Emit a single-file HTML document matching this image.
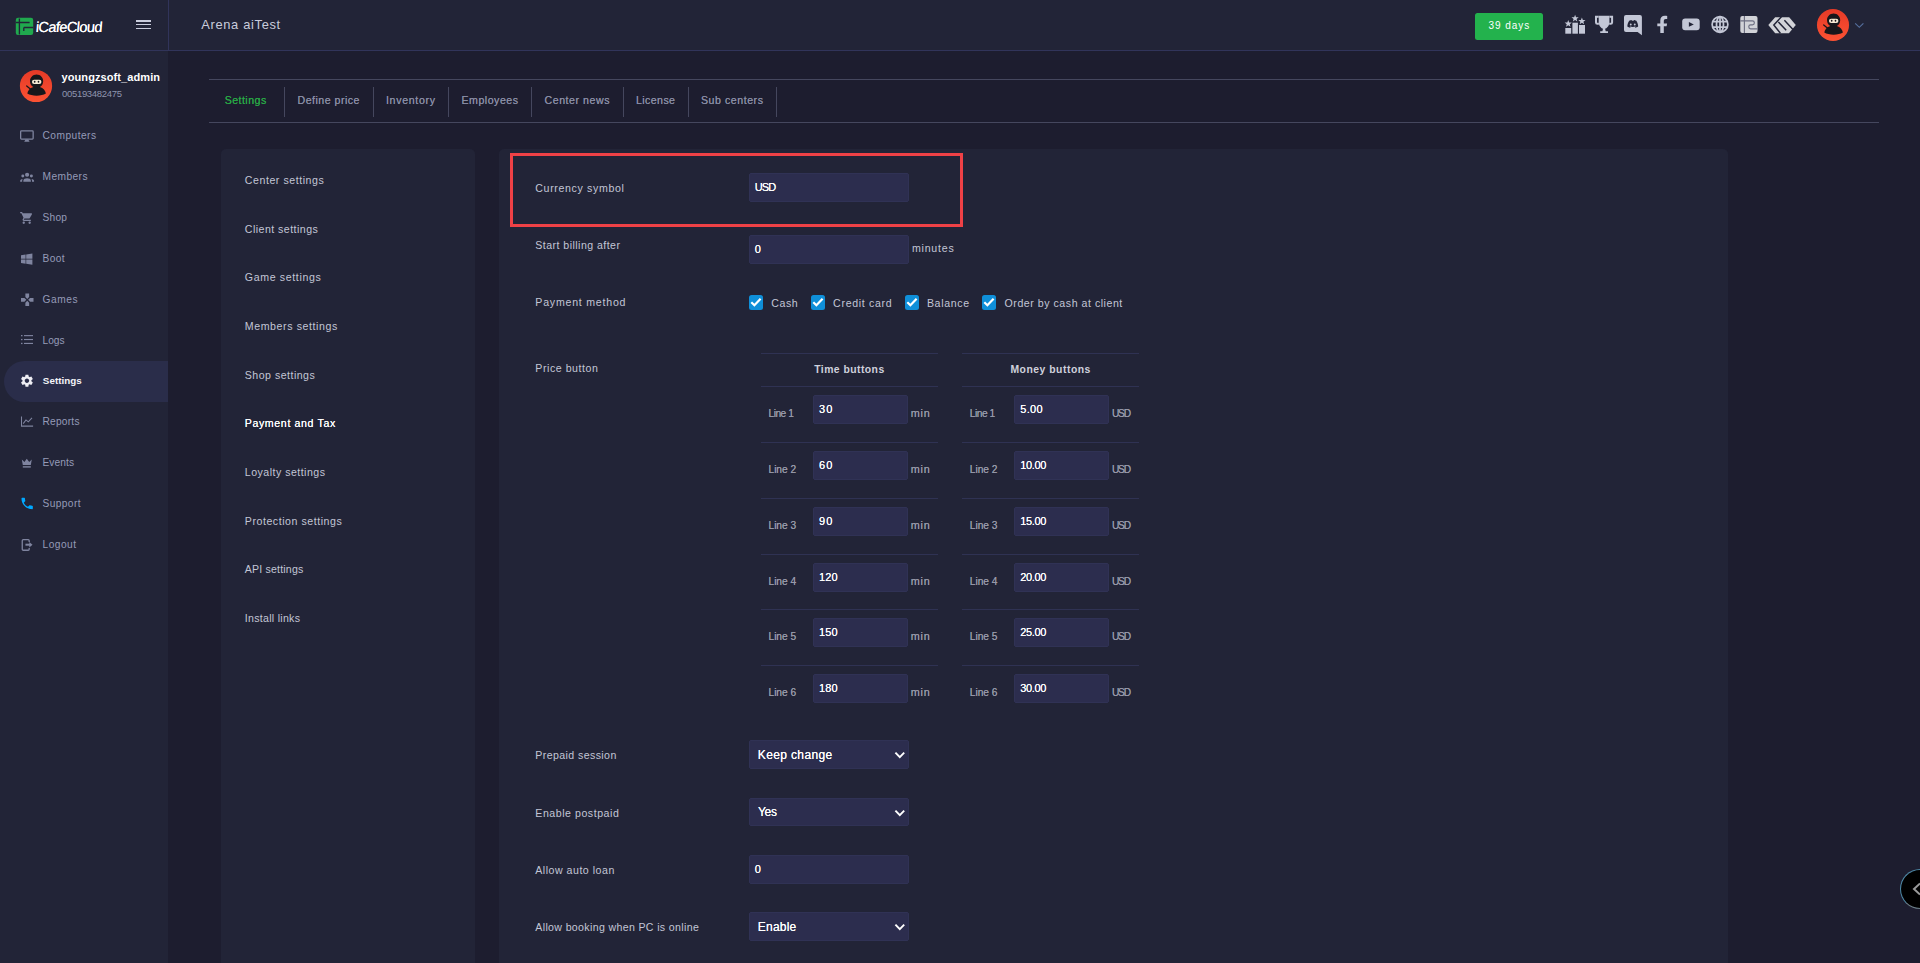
<!DOCTYPE html>
<html lang="en"><head><meta charset="utf-8"><title>iCafeCloud - Settings</title>
<style>
*{box-sizing:border-box;margin:0;padding:0}
html,body{width:1920px;height:963px;overflow:hidden;background:#1d1d2f;font-family:"Liberation Sans",sans-serif;}
.abs{position:absolute}
.t{position:absolute;white-space:nowrap;line-height:20px;height:20px}
#header{position:absolute;left:0;top:0;width:1920px;height:51px;background:#222437;border-bottom:1px solid #31345a}
#hdiv{position:absolute;left:168px;top:0;width:1px;height:50px;background:#31345a}
#sidebar{position:absolute;left:0;top:51px;width:168px;height:912px;background:#222437}
#active{position:absolute;left:4px;top:361px;width:164px;height:41px;background:#2a2d4a;border-radius:21px 0 0 21px}
.hl{position:absolute;height:1px;background:#45475e}
.vl{position:absolute;width:1px;background:#45475e;top:87px;height:30px}
.panel{position:absolute;background:#222437;border-radius:5px}
.inp{position:absolute;background:#2c2d4e;border:1px solid #303255;border-radius:2px;height:29px;color:#fff;font-size:11px;line-height:27px;padding-left:5px;font-family:"Liberation Sans",sans-serif;text-shadow:0 0 0.4px #fff}
.cb{position:absolute;top:295.2px;width:14.2px;height:14.6px;background:#0f8fd9;border-radius:2.5px}
.cb svg{position:absolute;left:0;top:0}
.tl{position:absolute;height:1px;background:#2f3253}
#logotext{left:34.6px;top:16.5px;font-size:14.6px;line-height:20px;color:#fff;letter-spacing:-0.62px;white-space:nowrap;text-shadow:0 0 0.5px #fff;display:inline-block;transform:skewX(-5deg);transform-origin:0 100%}
.hb{left:136px;width:15px;height:1.5px;background:#c9ccdc}

</style></head>
<body>
<div id="header"></div>
<div id="hdiv"></div>
<div id="sidebar"></div>
<div id="active"></div>

<!-- logo -->
<svg class="abs" style="left:15px;top:17px" width="20" height="19" viewBox="15 17 20 19">
  <rect x="15.800" y="17.800" width="17.400" height="17.200" rx="2.200" fill="#20a94e"/>
  <path d="M19.400 18.600V34.400M15.800 22.500H29.600M23.800 27.500H33.200M23.800 27.500V31" fill="none" stroke="#222437" stroke-width="1.350"/>
</svg>
<span class="abs" id="logotext">iCafeCloud</span>
<!-- hamburger -->
<div class="abs hb" style="top:20.100px"></div>
<div class="abs hb" style="top:23.900px"></div>
<div class="abs hb" style="top:27.500px"></div>

<!-- days badge -->
<div class="abs" style="left:1475px;top:13px;width:68px;height:27px;background:#23b24d;border-radius:2.500px"></div>

<!-- header icons -->
<svg class="abs" style="left:1560px;top:5px" width="310" height="40" viewBox="1560 5 310 40">
  <g fill="#c3c7d6">
    <rect x="1565.300" y="28" width="5.900" height="5.700"/><rect x="1572.400" y="22.700" width="5.500" height="11"/><rect x="1579" y="25" width="6" height="8.700"/>
    <polygon points="1568.25,19.90 1569.19,22.41 1571.86,22.53 1569.77,24.19 1570.48,26.77 1568.25,25.30 1566.02,26.77 1566.73,24.19 1564.64,22.53 1567.31,22.41"/><polygon points="1575.10,14.70 1576.04,17.21 1578.71,17.33 1576.62,18.99 1577.33,21.57 1575.10,20.10 1572.87,21.57 1573.58,18.99 1571.49,17.33 1574.16,17.21"/><polygon points="1581.90,17.40 1582.84,19.91 1585.51,20.03 1583.42,21.69 1584.13,24.27 1581.90,22.80 1579.67,24.27 1580.38,21.69 1578.29,20.03 1580.96,19.91"/>
    <path d="M1598.700 15.800H1609.400V22C1609.400 26.400 1606.500 28.300 1605.100 28.800L1605.700 31.200H1608V33H1600.200V31.200H1602.400L1603 28.800C1601.600 28.300 1598.700 26.400 1598.700 22Z"/>
    <path d="M1598.700 16.800H1596V22.400Q1596 23.800 1597.400 23.800H1598.900M1609.400 16.800H1612.100V22.400Q1612.100 23.800 1610.700 23.800H1609.200" fill="none" stroke="#c3c7d6" stroke-width="2"/>
    <path d="M1626 14.900H1639.900A2 2 0 0 1 1641.900 16.900V35.200L1637.600 32H1626A2 2 0 0 1 1624 30V16.900A2 2 0 0 1 1626 14.900Z"/>
    <path d="M1663.800 33V26.200H1666.600L1667.100 23.400H1663.800V21.200C1663.800 19.700 1664.400 18.900 1665.800 18.900H1667.200V16C1666.600 15.900 1665.700 15.800 1664.800 15.800C1662 15.800 1660.300 17.500 1660.300 20.500V23.400H1657.300V26.200H1660.300V33Z"/>
    <rect x="1682.200" y="18.600" width="17.500" height="11.600" rx="3"/>
  </g>
  <g transform="translate(1632.750 24)" fill="#222437"><path d="M-3.600 -3.200C-2.600 -3.700 -1.600 -3.900 -1.200 -3.900L-0.900 -3.300H0.900L1.200 -3.900C1.600 -3.900 2.600 -3.700 3.600 -3.200C4.800 -1.400 5.500 0.800 5.400 2.600C4.400 3.400 3.300 3.700 2.700 3.800L2.100 2.900C2.500 2.800 2.900 2.600 3.200 2.300C1.200 3.200 -1.200 3.200 -3.200 2.300C-2.900 2.600 -2.500 2.800 -2.100 2.900L-2.700 3.800C-3.300 3.700 -4.400 3.400 -5.400 2.600C-5.500 0.800 -4.800 -1.400 -3.600 -3.200Z"/>
    <ellipse cx="-2" cy="0.500" rx="0.950" ry="1.100" fill="#c3c7d6"/><ellipse cx="2" cy="0.500" rx="0.950" ry="1.100" fill="#c3c7d6"/></g>
  <path d="M1688.900 22L1693.800 24.400L1688.900 26.800Z" fill="#222437"/>
  <g fill="none" stroke="#c3c7d6" stroke-width="1.750"><circle cx="1720" cy="24.400" r="7.850"/><ellipse cx="1720" cy="24.400" rx="3.500" ry="7.850"/><path d="M1720 16.600V32.200M1712.700 21.700H1727.300M1712.700 27.100H1727.300"/></g>
  <rect x="1740.300" y="16.100" width="17.200" height="16.900" rx="2" fill="#d2d3d8"/>
  <path d="M1744.400 16.100V33M1740.300 20.800H1752.400Q1754.300 20.800 1754.300 22.600V23.100Q1754.300 24.900 1752.400 24.900H1750.600Q1748.800 24.900 1748.800 26.600V27.100Q1748.800 28.800 1750.600 28.800H1757.500" fill="none" stroke="#6d6f82" stroke-width="1.150"/>
  <polygon points="1768.300,25 1775.200,17.300 1789.200,17.300 1795.800,25 1788.900,33.200 1775.200,33.200" fill="#d2d3d8"/>
  <path d="M1781.600 16.600L1773.800 25L1780.400 33.200M1778.400 22L1786.200 30.300M1784.400 20.200L1793 29.400" fill="none" stroke="#222437" stroke-width="1.450"/>
  <path d="M1855.200 23.300L1859.300 27.300L1863.400 23.300" fill="none" stroke="#56709f" stroke-width="1.150"/>
</svg>
<!-- avatar -->
<svg class="abs" style="left:1816px;top:8px" width="34" height="34" viewBox="0 0 34 34">
  <defs><linearGradient id="ag" x1="0" y1="0" x2="0" y2="1"><stop offset="0" stop-color="#e63a27"/><stop offset="1" stop-color="#fb5233"/></linearGradient></defs>
  <circle cx="17" cy="17" r="16.050" fill="url(#ag)"/>
  <path d="M17.600 5.600c3.700 0 6.600 2.900 6.600 6.600 0 2.500-1.300 4.600-3.300 5.800 3.300 1 5.600 3.500 6 6.600 -2.300 1.500-5.600 2.100-9.300 2.100s-7-.6-9.300-2.100c.4-3.100 2.700-5.600 6-6.600-2-1.200-3.300-3.300-3.300-5.800 0-3.700 2.900-6.600 6.600-6.600z" fill="#17171b"/>
  <rect x="13" y="10.700" width="9.400" height="4.300" rx="2.100" fill="#f6ead4"/>
  <ellipse cx="15.700" cy="12.800" rx="0.850" ry="1.050" fill="#17171b"/><ellipse cx="19.500" cy="12.800" rx="0.850" ry="1.050" fill="#17171b"/>
  <path d="M7.700 16.900l5.200 4.300" stroke="#17171b" stroke-width="1.300" stroke-linecap="round"/>
</svg>

<!-- sidebar avatar -->
<svg class="abs" style="left:19px;top:69px" width="34" height="34" viewBox="0 0 34 34">
  <circle cx="17" cy="17" r="16.100" fill="url(#ag)"/>
  <path d="M17.600 5.600c3.700 0 6.600 2.900 6.600 6.600 0 2.500-1.300 4.600-3.300 5.800 3.300 1 5.600 3.500 6 6.600 -2.300 1.500-5.600 2.100-9.300 2.100s-7-.6-9.300-2.100c.4-3.100 2.700-5.600 6-6.600-2-1.200-3.300-3.300-3.300-5.800 0-3.700 2.900-6.600 6.600-6.600z" fill="#17171b"/>
  <rect x="13" y="10.700" width="9.400" height="4.300" rx="2.100" fill="#f6ead4"/>
  <ellipse cx="15.700" cy="12.800" rx="0.850" ry="1.050" fill="#17171b"/><ellipse cx="19.500" cy="12.800" rx="0.850" ry="1.050" fill="#17171b"/>
  <path d="M7.700 16.900l5.200 4.300" stroke="#17171b" stroke-width="1.300" stroke-linecap="round"/>
</svg>

<!-- sidebar icons -->
<svg class="abs" style="left:14px;top:120px" width="30" height="440" viewBox="14 120 30 440">
  <g fill="#7f849f">
    <polygon points="25.500,139.400 28.300,139.400 29.600,141.800 24.200,141.800"/>
    <g transform="translate(27.100 177.350) scale(0.580 0.560) translate(-12 -10.950)"><circle cx="12" cy="6.500" r="3.600"/><circle cx="4.600" cy="8.500" r="2.600"/><circle cx="19.400" cy="8.500" r="2.600"/><path d="M5.500 19v-2.200c0-2.800 3.600-4.300 6.500-4.300s6.500 1.500 6.500 4.300V19z"/><path d="M0 19v-1.800c0-2 2.200-3.300 4.600-3.500-.7.800-1.100 1.900-1.100 3.100V19zM24 19v-1.800c0-2-2.200-3.300-4.600-3.500.7.800 1.100 1.900 1.100 3.100V19z"/></g>
    <g transform="translate(19.600 210.900) scale(0.592)"><path d="M7 18c-1.100 0-1.990.9-1.990 2S5.900 22 7 22s2-.9 2-2-.9-2-2-2zM1 2v2h2l3.600 7.590-1.350 2.450c-.16.280-.25.610-.25.960 0 1.100.9 2 2 2h12v-2H7.420c-.14 0-.25-.110-.25-.25l.03-.12.9-1.630h7.450c.75 0 1.410-.41 1.750-1.030l3.580-6.490c.08-.14.120-.31.120-.48 0-.55-.45-1-1-1H5.210l-.94-2H1zm16 16c-1.100 0-1.990.9-1.990 2s.89 2 1.990 2 2-.9 2-2-.9-2-2-2z"/></g>
    <path d="M21 255.200l4.600-.65v4.250H21zM26.200 254.450l6.200-.9v5.250h-6.200zM21 259.400h4.600v4.300L21 263.050zM26.200 259.400h6.200v5.300l-6.200-.9z"/>
    <g transform="translate(19.750 292.350) scale(0.625)"><path d="M15 7.500V2H9v5.500l3 3 3-3zM7.500 9H2v6h5.500l3-3-3-3zM9 16.500V22h6v-5.500l-3-3-3 3zM16.500 9l-3 3 3 3H22V9h-5.500z"/></g>
    <rect x="21" y="335" width="1.500" height="1.300"/><rect x="24" y="335.050" width="9" height="1.150"/><rect x="21" y="338.900" width="1.500" height="1.300"/><rect x="24" y="338.950" width="9" height="1.150"/><rect x="21" y="342.800" width="1.500" height="1.300"/><rect x="24" y="342.850" width="9" height="1.150"/>
    <polygon points="21.800,459.400 24.400,461.900 26.800,458.800 29.200,461.900 31.800,459.400 30.800,465.100 22.800,465.100"/><rect x="22.800" y="466.200" width="8" height="1.400"/>
    <polygon points="29.300,541.900 32.500,544.700 29.300,547.500"/>
  </g>
  <rect x="20.650" y="130.850" width="12.500" height="8.200" rx="0.800" fill="none" stroke="#7f849f" stroke-width="1.300"/>
  <g transform="translate(19.500 373.300) scale(0.620)" fill="#eeeef4"><path d="M19.140 12.940c.04-.3.060-.61.060-.94 0-.32-.02-.64-.07-.94l2.030-1.580c.18-.14.230-.41.120-.61l-1.920-3.320c-.12-.22-.37-.29-.59-.22l-2.390.96c-.5-.38-1.030-.7-1.620-.94l-.36-2.540c-.04-.24-.24-.41-.48-.41h-3.840c-.24 0-.43.170-.47.410l-.36 2.540c-.59.240-1.130.570-1.620.94l-2.390-.96c-.22-.08-.47 0-.59.220L2.740 8.870c-.12.210-.08.470.12.610l2.030 1.580c-.05.3-.09.630-.09.940s.02.640.07.940l-2.030 1.580c-.18.140-.23.410-.12.610l1.920 3.320c.12.220.37.290.59.220l2.390-.96c.5.380 1.030.7 1.620.94l.36 2.540c.05.240.24.410.48.410h3.840c.24 0 .44-.17.470-.41l.36-2.540c.59-.24 1.130-.56 1.620-.94l2.390.96c.22.080.47 0 .59-.22l1.920-3.320c.12-.22.070-.47-.12-.61l-2.010-1.580zM12 15.600c-1.980 0-3.600-1.620-3.600-3.600s1.620-3.600 3.600-3.600 3.600 1.620 3.600 3.600-1.620 3.600-3.600 3.600z"/></g>
  <path d="M21.500 416.600V426.100H33.100M23.200 423.600L26 419.900L28.300 421.800L32 417.800" fill="none" stroke="#7f849f" stroke-width="1.050"/>
  <g transform="translate(19.600 495.900) scale(0.630)" fill="#00a8ff"><path d="M6.620 10.790c1.440 2.830 3.760 5.140 6.590 6.590l2.200-2.200c.27-.27.670-.36 1.020-.24 1.120.37 2.330.57 3.570.57.550 0 1 .45 1 1V20c0 .55-.45 1-1 1-9.390 0-17-7.610-17-17 0-.55.450-1 1-1h3.500c.55 0 1 .45 1 1 0 1.250.2 2.450.57 3.570.11.350.03.740-.25 1.020l-2.200 2.200z"/></g>
  <path d="M29.200 542V540.700Q29.200 539.700 28.200 539.700H23.250Q22.250 539.700 22.250 540.700V549.250Q22.250 550.250 23.250 550.250H28.200Q29.200 550.250 29.200 549.250V547.900" fill="none" stroke="#7f849f" stroke-width="1.300"/>
  <path d="M25.450 544.700H30" fill="none" stroke="#7f849f" stroke-width="2"/>
</svg>

<!-- tabs -->
<div class="hl" style="left:209px;top:79px;width:1670px"></div>
<div class="hl" style="left:209px;top:122px;width:1670px"></div>
<div class="vl" style="left:284px"></div><div class="vl" style="left:373px"></div><div class="vl" style="left:448px"></div><div class="vl" style="left:531px"></div><div class="vl" style="left:623px"></div><div class="vl" style="left:688px"></div><div class="vl" style="left:776px"></div>

<!-- panels -->
<div class="panel" style="left:221px;top:149px;width:254px;height:830px"></div>
<div class="panel" style="left:499px;top:149px;width:1229px;height:830px"></div>
<div class="abs" style="left:509.500px;top:152.500px;width:453.500px;height:74.500px;border:3px solid #ef4146"></div>

<!-- inputs -->
<div class="inp" style="left:749px;top:173px;width:160px"></div>
<div class="inp" style="left:749px;top:235px;width:160px"></div>
<div class="inp" style="left:749px;top:855px;width:160px"></div>

<!-- checkboxes -->
<div class="cb" style="left:748.8px"><svg width="14" height="15" viewBox="0 0 14 15" fill="none" stroke="#fff" stroke-width="2.200"><path d="M2.300 7.200L5.400 10.200L11.600 3.700"/></svg></div>
<div class="cb" style="left:810.8px"><svg width="14" height="15" viewBox="0 0 14 15" fill="none" stroke="#fff" stroke-width="2.200"><path d="M2.300 7.200L5.400 10.200L11.600 3.700"/></svg></div>
<div class="cb" style="left:904.9px"><svg width="14" height="15" viewBox="0 0 14 15" fill="none" stroke="#fff" stroke-width="2.200"><path d="M2.300 7.200L5.400 10.200L11.600 3.700"/></svg></div>
<div class="cb" style="left:982px"><svg width="14" height="15" viewBox="0 0 14 15" fill="none" stroke="#fff" stroke-width="2.200"><path d="M2.300 7.200L5.400 10.200L11.600 3.700"/></svg></div>

<!-- tables -->
<div class="tl" style="left:761px;top:353px;width:177px"></div><div class="tl" style="left:962px;top:353px;width:177px"></div>
<div class="tl" style="left:761px;top:386px;width:177px"></div><div class="tl" style="left:962px;top:386px;width:177px"></div>
<div class="tl" style="left:761px;top:442px;width:177px"></div><div class="tl" style="left:962px;top:442px;width:177px"></div>
<div class="tl" style="left:761px;top:498px;width:177px"></div><div class="tl" style="left:962px;top:498px;width:177px"></div>
<div class="tl" style="left:761px;top:554px;width:177px"></div><div class="tl" style="left:962px;top:554px;width:177px"></div>
<div class="tl" style="left:761px;top:609px;width:177px"></div><div class="tl" style="left:962px;top:609px;width:177px"></div>
<div class="tl" style="left:761px;top:665px;width:177px"></div><div class="tl" style="left:962px;top:665px;width:177px"></div>
<div class="inp" style="left:813px;top:395px;width:95px"></div><div class="inp" style="left:1014px;top:395px;width:95px"></div>
<div class="inp" style="left:813px;top:451px;width:95px"></div><div class="inp" style="left:1014px;top:451px;width:95px"></div>
<div class="inp" style="left:813px;top:507px;width:95px"></div><div class="inp" style="left:1014px;top:507px;width:95px"></div>
<div class="inp" style="left:813px;top:563px;width:95px"></div><div class="inp" style="left:1014px;top:563px;width:95px"></div>
<div class="inp" style="left:813px;top:618px;width:95px"></div><div class="inp" style="left:1014px;top:618px;width:95px"></div>
<div class="inp" style="left:813px;top:674px;width:95px"></div><div class="inp" style="left:1014px;top:674px;width:95px"></div>

<!-- selects -->
<div class="inp" style="left:749px;top:740px;width:160px"><svg class="abs" style="left:144px;top:10px" width="12" height="9" viewBox="0 0 12 9" fill="none" stroke="#fff" stroke-width="1.900"><path d="M1.400 1.600l4.400 4.500 4.400-4.500"/></svg></div>
<div class="inp" style="left:749px;top:798px;width:160px;height:28px"><svg class="abs" style="left:144px;top:10px" width="12" height="9" viewBox="0 0 12 9" fill="none" stroke="#fff" stroke-width="1.900"><path d="M1.400 1.600l4.400 4.500 4.400-4.500"/></svg></div>
<div class="inp" style="left:749px;top:912px;width:160px"><svg class="abs" style="left:144px;top:10px" width="12" height="9" viewBox="0 0 12 9" fill="none" stroke="#fff" stroke-width="1.900"><path d="M1.400 1.600l4.400 4.500 4.400-4.500"/></svg></div>

<!-- floating btn -->
<div class="abs" style="left:1900px;top:869px;width:40px;height:40px;border-radius:50%;background:#000;border:1px solid;border-color:#4f8aa8 #6b7d86 #6b7d86 #4f8aa8"></div>
<svg class="abs" style="left:1911px;top:880px" width="9" height="18" viewBox="0 0 9 18" fill="none" stroke="#9a9a9a" stroke-width="2"><path d="M9 3.500L3 9l6 5.500"/></svg>

<div id="texts">
<span class="t" style="left:201.2px;top:14.53px;font-size:12.9px;color:#c9ccdc;letter-spacing:0.668px;">Arena aiTest</span>
<span class="t" style="left:1488.6px;top:15.54px;font-size:10px;color:#ffffff;letter-spacing:0.928px;">39 days</span>
<span class="t" style="left:61.5px;top:67.19px;font-size:11px;font-weight:700;color:#ffffff;letter-spacing:0.089px;">youngzsoft_admin</span>
<span class="t" style="left:62px;top:83.71px;font-size:9.5px;color:#8e94ae;letter-spacing:-0.310px;">005193482475</span>
<span class="t" style="left:42.5px;top:126.47px;font-size:10.2px;color:#959bb8;letter-spacing:0.459px;">Computers</span>
<span class="t" style="left:42.5px;top:167.47px;font-size:10.2px;color:#959bb8;letter-spacing:0.422px;">Members</span>
<span class="t" style="left:42.5px;top:208.47px;font-size:10.2px;color:#959bb8;letter-spacing:0.234px;">Shop</span>
<span class="t" style="left:42.5px;top:249.47px;font-size:10.2px;color:#959bb8;letter-spacing:0.344px;">Boot</span>
<span class="t" style="left:42.5px;top:290.47px;font-size:10.2px;color:#959bb8;letter-spacing:0.539px;">Games</span>
<span class="t" style="left:42.5px;top:331.47px;font-size:10.2px;color:#959bb8;letter-spacing:-0.031px;">Logs</span>
<span class="t" style="left:42.8px;top:370.60px;font-size:9.8px;font-weight:700;color:#f4f4f8;letter-spacing:0.049px;">Settings</span>
<span class="t" style="left:42.5px;top:412.47px;font-size:10.2px;color:#959bb8;letter-spacing:0.221px;">Reports</span>
<span class="t" style="left:42.5px;top:453.47px;font-size:10.2px;color:#959bb8;letter-spacing:0.069px;">Events</span>
<span class="t" style="left:42.5px;top:494.47px;font-size:10.2px;color:#959bb8;letter-spacing:0.385px;">Support</span>
<span class="t" style="left:42.5px;top:535.47px;font-size:10.2px;color:#959bb8;letter-spacing:0.466px;">Logout</span>
<span class="t" style="left:224.7px;top:90.33px;font-size:10.6px;color:#28a745;letter-spacing:0.460px;text-shadow:0 0 0.45px currentColor">Settings</span>
<span class="t" style="left:297.5px;top:90.33px;font-size:10.6px;color:#888ca4;letter-spacing:0.497px;text-shadow:0 0 0.45px currentColor">Define price</span>
<span class="t" style="left:386px;top:90.33px;font-size:10.6px;color:#888ca4;letter-spacing:0.678px;text-shadow:0 0 0.45px currentColor">Inventory</span>
<span class="t" style="left:461.5px;top:90.33px;font-size:10.6px;color:#888ca4;letter-spacing:0.512px;text-shadow:0 0 0.45px currentColor">Employees</span>
<span class="t" style="left:544.5px;top:90.33px;font-size:10.6px;color:#888ca4;letter-spacing:0.552px;text-shadow:0 0 0.45px currentColor">Center news</span>
<span class="t" style="left:636px;top:90.33px;font-size:10.6px;color:#888ca4;letter-spacing:0.414px;text-shadow:0 0 0.45px currentColor">License</span>
<span class="t" style="left:701px;top:90.33px;font-size:10.6px;color:#888ca4;letter-spacing:0.545px;text-shadow:0 0 0.45px currentColor">Sub centers</span>
<span class="t" style="left:244.8px;top:170.33px;font-size:10.6px;color:#c3c6d6;letter-spacing:0.554px;">Center settings</span>
<span class="t" style="left:244.8px;top:219.33px;font-size:10.6px;color:#c3c6d6;letter-spacing:0.461px;">Client settings</span>
<span class="t" style="left:244.8px;top:267.33px;font-size:10.6px;color:#c3c6d6;letter-spacing:0.641px;">Game settings</span>
<span class="t" style="left:244.8px;top:316.33px;font-size:10.6px;color:#c3c6d6;letter-spacing:0.593px;">Members settings</span>
<span class="t" style="left:244.8px;top:365.33px;font-size:10.6px;color:#c3c6d6;letter-spacing:0.483px;">Shop settings</span>
<span class="t" style="left:244.7px;top:413.33px;font-size:10.6px;color:#ffffff;letter-spacing:0.638px;text-shadow:0 0 0.45px #fff">Payment and Tax</span>
<span class="t" style="left:244.8px;top:462.33px;font-size:10.6px;color:#c3c6d6;letter-spacing:0.478px;">Loyalty settings</span>
<span class="t" style="left:244.8px;top:511.33px;font-size:10.6px;color:#c3c6d6;letter-spacing:0.547px;">Protection settings</span>
<span class="t" style="left:244.8px;top:559.33px;font-size:10.6px;color:#c3c6d6;letter-spacing:0.179px;">API settings</span>
<span class="t" style="left:244.8px;top:608.33px;font-size:10.6px;color:#c3c6d6;letter-spacing:0.282px;">Install links</span>
<span class="t" style="left:535.3px;top:178.33px;font-size:10.6px;color:#c3c6d6;letter-spacing:0.651px;">Currency symbol</span>
<span class="t" style="left:535.3px;top:235.33px;font-size:10.6px;color:#c3c6d6;letter-spacing:0.453px;">Start billing after</span>
<span class="t" style="left:535.3px;top:292.33px;font-size:10.6px;color:#c3c6d6;letter-spacing:0.777px;">Payment method</span>
<span class="t" style="left:535.3px;top:358.33px;font-size:10.6px;color:#c3c6d6;letter-spacing:0.550px;">Price button</span>
<span class="t" style="left:535.3px;top:745.33px;font-size:10.6px;color:#c3c6d6;letter-spacing:0.401px;">Prepaid session</span>
<span class="t" style="left:535.3px;top:803.33px;font-size:10.6px;color:#c3c6d6;letter-spacing:0.537px;">Enable postpaid</span>
<span class="t" style="left:535.3px;top:860.33px;font-size:10.6px;color:#c3c6d6;letter-spacing:0.510px;">Allow auto loan</span>
<span class="t" style="left:535.3px;top:917.33px;font-size:10.6px;color:#c3c6d6;letter-spacing:0.346px;">Allow booking when PC is online</span>
<span class="t" style="left:911.9px;top:238.33px;font-size:10.6px;color:#c3c6d6;letter-spacing:0.784px;">minutes</span>
<span class="t" style="left:771.2px;top:293.33px;font-size:10.6px;color:#c3c6d6;letter-spacing:0.589px;">Cash</span>
<span class="t" style="left:833.1px;top:293.33px;font-size:10.6px;color:#c3c6d6;letter-spacing:0.679px;">Credit card</span>
<span class="t" style="left:926.9px;top:293.33px;font-size:10.6px;color:#c3c6d6;letter-spacing:0.667px;">Balance</span>
<span class="t" style="left:1004.6px;top:293.33px;font-size:10.6px;color:#c3c6d6;letter-spacing:0.533px;">Order by cash at client</span>
<span class="t" style="left:814.2px;top:360.40px;font-size:10.4px;font-weight:700;color:#cfd1dc;letter-spacing:0.450px;">Time buttons</span>
<span class="t" style="left:1010.4px;top:360.40px;font-size:10.4px;font-weight:700;color:#cfd1dc;letter-spacing:0.509px;">Money buttons</span>
<span class="t" style="left:768.5px;top:404.47px;font-size:10.2px;color:#9698a8;letter-spacing:-0.493px;text-shadow:0 0 0.45px currentColor">Line 1</span>
<span class="t" style="left:910.8px;top:403.26px;font-size:10.8px;color:#9698a8;letter-spacing:0.797px;text-shadow:0 0 0.45px currentColor">min</span>
<span class="t" style="left:969.8px;top:404.47px;font-size:10.2px;color:#9698a8;letter-spacing:-0.493px;text-shadow:0 0 0.45px currentColor">Line 1</span>
<span class="t" style="left:1112px;top:404.47px;font-size:10.2px;color:#9698a8;letter-spacing:-1.258px;text-shadow:0 0 0.3px currentColor">USD</span>
<span class="t" style="left:819px;top:399.19px;font-size:11px;color:#ffffff;letter-spacing:1.050px;text-shadow:0 0 0.35px #fff">30</span>
<span class="t" style="left:1020.3px;top:399.19px;font-size:11px;color:#ffffff;letter-spacing:0.293px;text-shadow:0 0 0.35px #fff">5.00</span>
<span class="t" style="left:768.5px;top:460.47px;font-size:10.2px;color:#9698a8;letter-spacing:-0.033px;text-shadow:0 0 0.45px currentColor">Line 2</span>
<span class="t" style="left:910.8px;top:459.26px;font-size:10.8px;color:#9698a8;letter-spacing:0.797px;text-shadow:0 0 0.45px currentColor">min</span>
<span class="t" style="left:969.8px;top:460.47px;font-size:10.2px;color:#9698a8;letter-spacing:-0.033px;text-shadow:0 0 0.45px currentColor">Line 2</span>
<span class="t" style="left:1112px;top:460.47px;font-size:10.2px;color:#9698a8;letter-spacing:-1.258px;text-shadow:0 0 0.3px currentColor">USD</span>
<span class="t" style="left:819px;top:455.19px;font-size:11px;color:#ffffff;letter-spacing:1.050px;text-shadow:0 0 0.35px #fff">60</span>
<span class="t" style="left:1020.3px;top:455.19px;font-size:11px;color:#ffffff;letter-spacing:-0.383px;text-shadow:0 0 0.35px #fff">10.00</span>
<span class="t" style="left:768.5px;top:516.47px;font-size:10.2px;color:#9698a8;letter-spacing:-0.033px;text-shadow:0 0 0.45px currentColor">Line 3</span>
<span class="t" style="left:910.8px;top:515.26px;font-size:10.8px;color:#9698a8;letter-spacing:0.797px;text-shadow:0 0 0.45px currentColor">min</span>
<span class="t" style="left:969.8px;top:516.47px;font-size:10.2px;color:#9698a8;letter-spacing:-0.033px;text-shadow:0 0 0.45px currentColor">Line 3</span>
<span class="t" style="left:1112px;top:516.47px;font-size:10.2px;color:#9698a8;letter-spacing:-1.258px;text-shadow:0 0 0.3px currentColor">USD</span>
<span class="t" style="left:819px;top:511.19px;font-size:11px;color:#ffffff;letter-spacing:1.050px;text-shadow:0 0 0.35px #fff">90</span>
<span class="t" style="left:1020.3px;top:511.19px;font-size:11px;color:#ffffff;letter-spacing:-0.383px;text-shadow:0 0 0.35px #fff">15.00</span>
<span class="t" style="left:768.5px;top:572.47px;font-size:10.2px;color:#9698a8;letter-spacing:-0.033px;text-shadow:0 0 0.45px currentColor">Line 4</span>
<span class="t" style="left:910.8px;top:571.26px;font-size:10.8px;color:#9698a8;letter-spacing:0.797px;text-shadow:0 0 0.45px currentColor">min</span>
<span class="t" style="left:969.8px;top:572.47px;font-size:10.2px;color:#9698a8;letter-spacing:-0.033px;text-shadow:0 0 0.45px currentColor">Line 4</span>
<span class="t" style="left:1112px;top:572.47px;font-size:10.2px;color:#9698a8;letter-spacing:-1.258px;text-shadow:0 0 0.3px currentColor">USD</span>
<span class="t" style="left:819px;top:567.19px;font-size:11px;color:#ffffff;letter-spacing:0.070px;text-shadow:0 0 0.35px #fff">120</span>
<span class="t" style="left:1020.3px;top:567.19px;font-size:11px;color:#ffffff;letter-spacing:-0.383px;text-shadow:0 0 0.35px #fff">20.00</span>
<span class="t" style="left:768.5px;top:627.47px;font-size:10.2px;color:#9698a8;letter-spacing:-0.033px;text-shadow:0 0 0.45px currentColor">Line 5</span>
<span class="t" style="left:910.8px;top:626.26px;font-size:10.8px;color:#9698a8;letter-spacing:0.797px;text-shadow:0 0 0.45px currentColor">min</span>
<span class="t" style="left:969.8px;top:627.47px;font-size:10.2px;color:#9698a8;letter-spacing:-0.033px;text-shadow:0 0 0.45px currentColor">Line 5</span>
<span class="t" style="left:1112px;top:627.47px;font-size:10.2px;color:#9698a8;letter-spacing:-1.258px;text-shadow:0 0 0.3px currentColor">USD</span>
<span class="t" style="left:819px;top:622.19px;font-size:11px;color:#ffffff;letter-spacing:0.070px;text-shadow:0 0 0.35px #fff">150</span>
<span class="t" style="left:1020.3px;top:622.19px;font-size:11px;color:#ffffff;letter-spacing:-0.383px;text-shadow:0 0 0.35px #fff">25.00</span>
<span class="t" style="left:768.5px;top:683.47px;font-size:10.2px;color:#9698a8;letter-spacing:-0.033px;text-shadow:0 0 0.45px currentColor">Line 6</span>
<span class="t" style="left:910.8px;top:682.26px;font-size:10.8px;color:#9698a8;letter-spacing:0.797px;text-shadow:0 0 0.45px currentColor">min</span>
<span class="t" style="left:969.8px;top:683.47px;font-size:10.2px;color:#9698a8;letter-spacing:-0.033px;text-shadow:0 0 0.45px currentColor">Line 6</span>
<span class="t" style="left:1112px;top:683.47px;font-size:10.2px;color:#9698a8;letter-spacing:-1.258px;text-shadow:0 0 0.3px currentColor">USD</span>
<span class="t" style="left:819px;top:678.19px;font-size:11px;color:#ffffff;letter-spacing:0.070px;text-shadow:0 0 0.35px #fff">180</span>
<span class="t" style="left:1020.3px;top:678.19px;font-size:11px;color:#ffffff;letter-spacing:-0.383px;text-shadow:0 0 0.35px #fff">30.00</span>
<span class="t" style="left:754.8px;top:177.19px;font-size:11px;color:#ffffff;letter-spacing:-0.867px;text-shadow:0 0 0.35px #fff">USD</span>
<span class="t" style="left:754.8px;top:239.19px;font-size:11px;color:#ffffff;letter-spacing:0.675px;text-shadow:0 0 0.35px #fff">0</span>
<span class="t" style="left:754.8px;top:859.19px;font-size:11px;color:#ffffff;letter-spacing:0.675px;text-shadow:0 0 0.35px #fff">0</span>
<span class="t" style="left:757.8px;top:744.84px;font-size:12px;color:#ffffff;letter-spacing:0.367px;text-shadow:0 0 0.45px #fff">Keep change</span>
<span class="t" style="left:758px;top:801.84px;font-size:12px;color:#ffffff;letter-spacing:-0.289px;text-shadow:0 0 0.45px #fff">Yes</span>
<span class="t" style="left:757.8px;top:916.84px;font-size:12px;color:#ffffff;letter-spacing:0.225px;text-shadow:0 0 0.45px #fff">Enable</span>
</div>
</body></html>
